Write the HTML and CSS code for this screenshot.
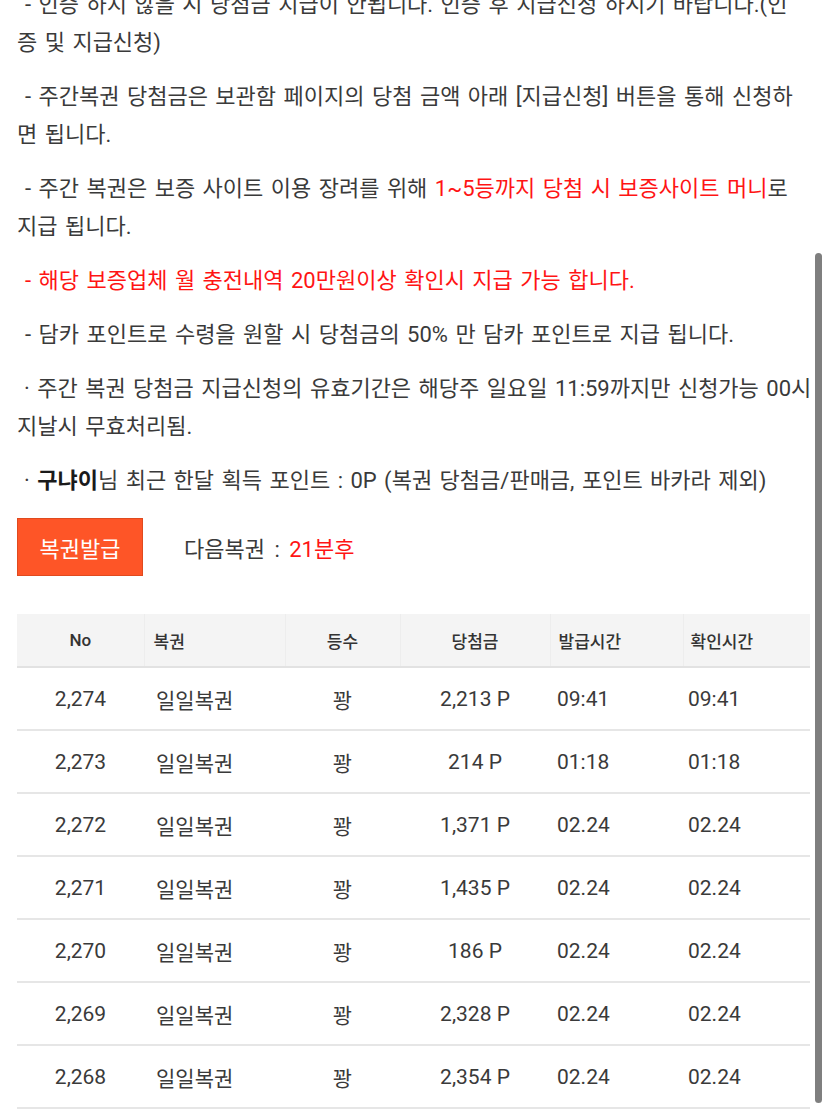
FILE: index.html
```html
<!DOCTYPE html>
<html lang="ko">
<head>
<meta charset="utf-8">
<title>복권</title>
<link rel="stylesheet" href="styles.css">
</head>
<body>
<div class="page">
  <div class="notice">
    <p class="dash">- 인증 하지 않을 시 당첨금 지급이 안됩니다. 인증 후 지급신청 하시기 바랍니다.(인<br>증 및 지급신청)</p>
    <p class="dash">- 주간복권 당첨금은 보관함 페이지의 당첨 금액 아래 [지급신청] 버튼을 통해 신청하<br>면 됩니다.</p>
    <p class="dash">- 주간 복권은 보증 사이트 이용 장려를 위해 <span class="red">1~5등까지 당첨 시 보증사이트 머니</span>로<br>지급 됩니다.</p>
    <p class="dash red">- 해당 보증업체 월 충전내역 20만원이상 확인시 지급 가능 합니다.</p>
    <p class="dash">- 담카 포인트로 수령을 원할 시 당첨금의 50% 만 담카 포인트로 지급 됩니다.</p>
    <p class="dot">· 주간 복권 당첨금 지급신청의 유효기간은 해당주 일요일 11:59까지만 신청가능 00시<br>지날시 무효처리됨.</p>
    <p class="dot">· <b>구냐이</b>님 최근 한달 획득 포인트 : 0P (복권 당첨금/판매금, 포인트 바카라 제외)</p>
  </div>

  <div class="issue">
    <button class="issue-btn" type="button">복권발급</button>
    <span class="next">다음복권 : <span class="red">21분후</span></span>
  </div>

  <table class="tickets">
    <thead>
      <tr>
        <th class="c-no">No</th>
        <th class="c-name">복권</th>
        <th class="c-rank">등수</th>
        <th class="c-prize">당첨금</th>
        <th class="c-time">발급시간</th>
        <th class="c-check">확인시간</th>
      </tr>
    </thead>
    <tbody>
      <tr><td class="c-no">2,274</td><td class="c-name">일일복권</td><td class="c-rank">꽝</td><td class="c-prize">2,213 P</td><td class="c-time">09:41</td><td class="c-check">09:41</td></tr>
      <tr><td class="c-no">2,273</td><td class="c-name">일일복권</td><td class="c-rank">꽝</td><td class="c-prize">214 P</td><td class="c-time">01:18</td><td class="c-check">01:18</td></tr>
      <tr><td class="c-no">2,272</td><td class="c-name">일일복권</td><td class="c-rank">꽝</td><td class="c-prize">1,371 P</td><td class="c-time">02.24</td><td class="c-check">02.24</td></tr>
      <tr><td class="c-no">2,271</td><td class="c-name">일일복권</td><td class="c-rank">꽝</td><td class="c-prize">1,435 P</td><td class="c-time">02.24</td><td class="c-check">02.24</td></tr>
      <tr><td class="c-no">2,270</td><td class="c-name">일일복권</td><td class="c-rank">꽝</td><td class="c-prize">186 P</td><td class="c-time">02.24</td><td class="c-check">02.24</td></tr>
      <tr><td class="c-no">2,269</td><td class="c-name">일일복권</td><td class="c-rank">꽝</td><td class="c-prize">2,328 P</td><td class="c-time">02.24</td><td class="c-check">02.24</td></tr>
      <tr><td class="c-no">2,268</td><td class="c-name">일일복권</td><td class="c-rank">꽝</td><td class="c-prize">2,354 P</td><td class="c-time">02.24</td><td class="c-check">02.24</td></tr>
    </tbody>
  </table>
</div>
<div class="scrollbar"></div>
</body>
</html>
```

FILE: styles.css
```css
html, body {
  margin: 0;
  padding: 0;
  background: #fff;
}
body {
  font-family: Roboto, "Noto Sans CJK KR", sans-serif;
  color: #3a3a3a;
  overflow: hidden;
}
.page {
  padding: 0 17px;
  margin-top: -14px;
}
.notice p {
  margin: 0 0 16px 0;
  font-size: 22px;
  line-height: 38px;
  letter-spacing: 0;
  word-spacing: 2px;
  white-space: nowrap;
}
.notice .dash {
  text-indent: 8px;
}
.notice .dot {
  text-indent: 7px;
}
.notice b {
  font-weight: 700;
  color: #1a1a1a;
}
.red {
  color: #ff1414;
}
.issue {
  display: flex;
  align-items: center;
  gap: 41px;
  margin-top: 18px;
}
.issue-btn {
  width: 126px;
  height: 58px;
  background: #fe5527;
  border: 1px solid #e04a1e;
  color: #fff;
  font-family: Roboto, "Noto Sans CJK KR", sans-serif;
  font-size: 22px;
  padding: 0;
  border-radius: 0;
}
.next {
  font-size: 22px;
  word-spacing: 4px;
}
.tickets {
  margin-top: 38px;
  width: 793px;
  border-collapse: collapse;
  table-layout: fixed;
}
.tickets th,
.tickets td {
  box-sizing: border-box;
  padding: 0;
}
.tickets th {
  background: #f4f4f4;
  height: 53px;
  font-size: 17px;
  font-weight: 500;
  color: #333;
  border-bottom: 2px solid #e2e2e2;
  border-left: 1px solid #ededed;
}
.tickets th:first-child {
  border-left: none;
}
.tickets td {
  height: 63px;
  font-size: 21px;
  color: #3a3a3a;
  border-bottom: 2px solid #e6e6e6;
}
.tickets .c-no { width: 127px; text-align: center; }
.tickets .c-name { width: 141px; text-align: left; }
.tickets .c-rank { width: 115px; text-align: center; }
.tickets .c-prize { width: 150px; text-align: center; }
.tickets .c-time { width: 133px; text-align: left; }
.tickets .c-check { width: 127px; text-align: left; }
.tickets th.c-name { padding-left: 9px; }
.tickets td.c-name { padding-left: 12px; }
.tickets th.c-time { padding-left: 8px; }
.tickets td.c-time { padding-left: 7px; }
.tickets th.c-check { padding-left: 7px; }
.tickets td.c-check { padding-left: 5px; }
.scrollbar {
  position: fixed;
  right: 6px;
  top: 253px;
  width: 7px;
  height: 850px;
  background: #7f7f7f;
  border-radius: 4px;
}
```
